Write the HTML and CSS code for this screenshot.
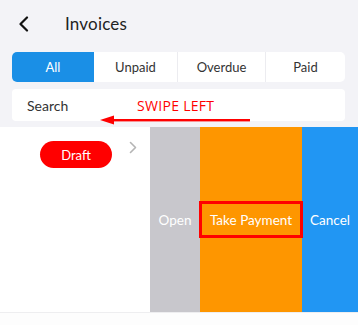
FILE: index.html
```html
<!DOCTYPE html>
<html>
<head>
<meta charset="utf-8">
<link rel="stylesheet" href="styles.css">
</head>
<body>
<div class="header">
  <div class="topbar">
    <svg class="back" width="12" height="16" viewBox="0 0 12 16"><path d="M9 1.5 L2.5 8 L9 14.5" fill="none" stroke="#111" stroke-width="2.2" stroke-linecap="round" stroke-linejoin="round"/></svg>
    <span class="title">Invoices</span>
  </div>
  <div class="segments">
    <div class="seg active">All</div>
    <div class="seg">Unpaid</div>
    <div class="seg">Overdue</div>
    <div class="seg">Paid</div>
  </div>
  <div class="search">
    <span class="search-text">Search</span>
    <span class="swipe">SWIPE LEFT</span>
    <svg class="arrow" width="150" height="10" viewBox="0 0 150 10"><path d="M0 5 L14 0.5 L14 9.5 Z" fill="#f00"/><rect x="12" y="4" width="138" height="2.4" fill="#f00"/></svg>
  </div>
</div>
<div class="row">
  <div class="content">
    <span class="pill">Draft</span>
    <svg class="chev" width="8" height="13" viewBox="0 0 8 13"><path d="M1.5 1.5 L6.5 6.5 L1.5 11.5" fill="none" stroke="#b5b5b5" stroke-width="1.6" stroke-linecap="round" stroke-linejoin="round"/></svg>
  </div>
  <div class="action open">Open</div>
  <div class="action take"><span class="highlight">Take Payment</span></div>
  <div class="action cancel">Cancel</div>
</div>
<div class="rest"></div>
</body>
</html>
```
FILE: styles.css
```css
* { box-sizing: border-box; }
html, body { margin: 0; padding: 0; }
body {
  width: 358px;
  height: 325px;
  overflow: hidden;
  background: #fdfdfd;
  font-family: Lato, "Open Sans", sans-serif;
  color: #333;
}
.header {
  background: #f3f3f7;
  padding: 0 12px 6px 12px;
  height: 127px;
}
.topbar {
  height: 52px;
  display: flex;
  align-items: center;
  padding-bottom: 5px;
}
.back { margin-left: 6px; }
.title {
  margin-left: 35px;
  font-size: 17px;
  color: #222;
  letter-spacing: 0.2px;
}
.segments {
  display: flex;
  height: 30px;
  background: #fff;
  border-radius: 5px;
  overflow: hidden;
  margin-right: 1px;
}
.seg {
  display: flex;
  align-items: center;
  justify-content: center;
  font-size: 13px;
  color: #333;
  border-left: 1px solid #ececf0;
}
.seg:nth-child(1) { width: 82px; border-left: none; }
.seg:nth-child(2) { width: 83px; }
.seg:nth-child(3) { width: 88px; }
.seg:nth-child(4) { flex: 1; }
.seg.active { background: #1a8fe6; color: #fff; border-left: none; }
.seg.active + .seg { border-left: none; }
.search {
  position: relative;
  margin-top: 7px;
  height: 32px;
  background: #fff;
  border-radius: 4px;
  margin-right: 1px;
  display: flex;
  align-items: center;
  padding-left: 15px;
}
.search-text { font-size: 14px; color: #333; }
.swipe {
  position: absolute;
  left: 125px;
  top: 7px;
  font-size: 14px;
  color: #f00;
  font-family: "Open Sans", sans-serif;
  letter-spacing: 0.3px;
}
.arrow {
  position: absolute;
  left: 88px;
  top: 26px;
}
.row {
  display: flex;
  height: 186px;
  background: #fff;
  border-bottom: 1px solid #eeeef0;
}
.content {
  width: 150px;
  position: relative;
}
.pill {
  position: absolute;
  left: 40px;
  top: 14px;
  width: 72px;
  height: 27px;
  border-radius: 14px;
  background: #f00;
  color: #fff;
  font-size: 13px;
  display: flex;
  align-items: center;
  justify-content: center;
}
.chev {
  position: absolute;
  left: 129px;
  top: 14px;
}
.action {
  display: flex;
  align-items: center;
  justify-content: center;
  color: #fff;
  font-size: 13.5px;
}
.open { width: 50px; background: #c8c7cc; }
.take { width: 102px; background: #fe9600; }
.cancel { flex: 1; background: #2196f3; }
.highlight {
  width: 104px;
  margin: 0 -1px;
  height: 37px;
  border: 3px solid #f00;
  display: flex;
  align-items: center;
  justify-content: center;
  position: relative;
  z-index: 1;
}
.rest { height: 20px; }
```
